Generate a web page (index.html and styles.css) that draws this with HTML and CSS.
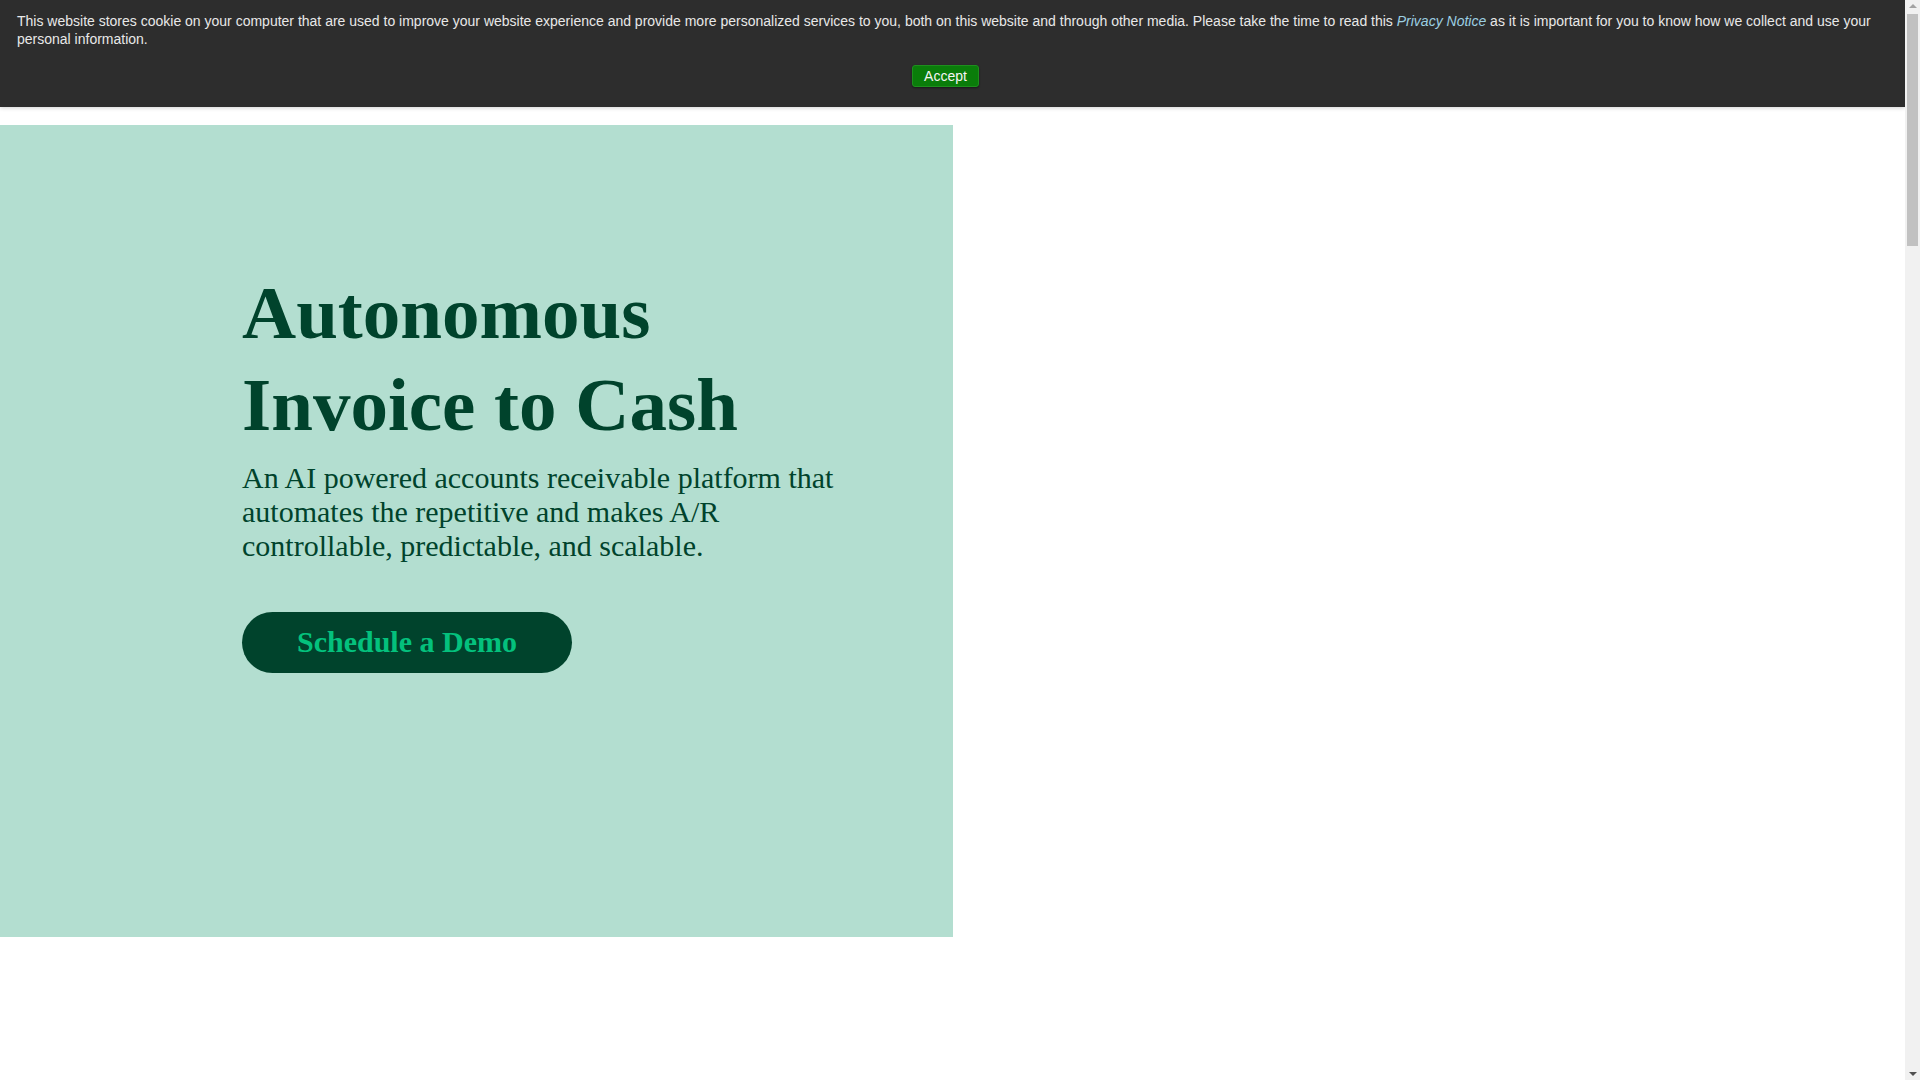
FILE: index.html
```html
<!DOCTYPE html>
<html lang="en">
<head>
<meta charset="utf-8">
<title>Autonomous Invoice to Cash</title>
<link rel="stylesheet" href="styles.css">
</head>
<body>
<div class="site">
  <div class="cookie-banner">
    <p class="cookie-text">This website stores cookie on your computer that are used to improve your website experience and provide more personalized services to you, both on this website and through other media. Please take the time to read this <a class="cookie-link" href="#">Privacy Notice</a> as it is important for you to know how we collect and use your personal information.</p>
    <div class="cookie-actions">
      <button class="accept-btn" type="button">Accept</button>
    </div>
  </div>
  <main class="page">
    <section class="hero">
      <div class="hero-panel">
        <div class="hero-content">
          <h1 class="hero-title">Autonomous<br>Invoice to Cash</h1>
          <p class="hero-sub">An AI powered accounts receivable platform that automates the repetitive and makes A/R controllable, predictable, and scalable.</p>
          <a class="demo-btn" href="#">Schedule a Demo</a>
        </div>
      </div>
      <div class="hero-media"></div>
    </section>
    <div class="below"></div>
  </main>
</div>
<div class="scrollbar" aria-hidden="true">
  <span class="sb-arrow sb-up"></span>
  <span class="sb-thumb"></span>
  <span class="sb-arrow sb-down"></span>
</div>
</body>
</html>
```
FILE: styles.css
```css
html, body {
  margin: 0;
  padding: 0;
  background: #ffffff;
}
html {
  scrollbar-width: none;
}
body {
  font-family: "Liberation Serif", "Times New Roman", serif;
}
.site {
  width: calc(100% - 15px);
}
.cookie-banner {
  background: #2d2d2d;
  padding: 12px 31px 20px 17px;
  box-shadow: 0 1px 4px rgba(0,0,0,0.18);
  height: 75px;
}
.cookie-text {
  margin: 0;
  font-family: "Liberation Sans", Arial, sans-serif;
  font-size: 14px;
  line-height: 18px;
  color: #e8e8e8;
}
.cookie-link {
  color: #9ccfe2;
  font-style: italic;
  text-decoration: none;
}
.cookie-actions {
  display: flex;
  justify-content: center;
  margin-top: 17px;
}
.accept-btn {
  font-family: "Liberation Sans", Arial, sans-serif;
  font-size: 14px;
  color: #f4f4f4;
  background: #0a7d0a;
  border: 1px solid #1e8f1e;
  border-radius: 3px;
  height: 22px;
  width: 67px;
  padding: 0;
  box-shadow: 0 1px 2px rgba(0,0,0,0.45);
}
.page {
  padding-top: 18px;
}
.hero {
  display: flex;
}
.hero-panel {
  width: 953px;
  height: 812px;
  background: #b3ded0;
  box-sizing: border-box;
  padding: 142px 0 0 242px;
}
.hero-content {
  width: 600px;
}
.hero-title {
  margin: 0;
  font-family: "Liberation Serif", "Times New Roman", serif;
  font-weight: 700;
  font-size: 75px;
  line-height: 92px;
  color: #00432c;
}
.hero-sub {
  margin: 10px 0 0;
  font-size: 30px;
  line-height: 34px;
  color: #00432c;
}
.demo-btn {
  display: inline-block;
  margin-top: 49px;
  height: 61px;
  box-sizing: border-box;
  padding: 12px 55px 0;
  border-radius: 31px;
  background: #00432c;
  color: #04c17d;
  font-weight: 700;
  font-size: 30px;
  line-height: 36px;
  text-decoration: none;
}
.hero-media {
  flex: 1;
}
.below {
  height: 3960px;
}
.scrollbar {
  position: fixed;
  top: 0;
  right: 0;
  width: 15px;
  height: 100vh;
  background: #f1f1f1;
  display: flex;
  flex-direction: column;
  align-items: center;
}
.sb-arrow {
  width: 0;
  height: 0;
  border-left: 4px solid transparent;
  border-right: 4px solid transparent;
}
.sb-up {
  margin-top: 4px;
  border-bottom: 4px solid #a3a3a3;
}
.sb-thumb {
  margin-top: 6px;
  width: 11px;
  height: 232px;
  background: #c1c1c1;
}
.sb-down {
  margin-top: auto;
  margin-bottom: 4px;
  border-top: 4px solid #505050;
}
```
